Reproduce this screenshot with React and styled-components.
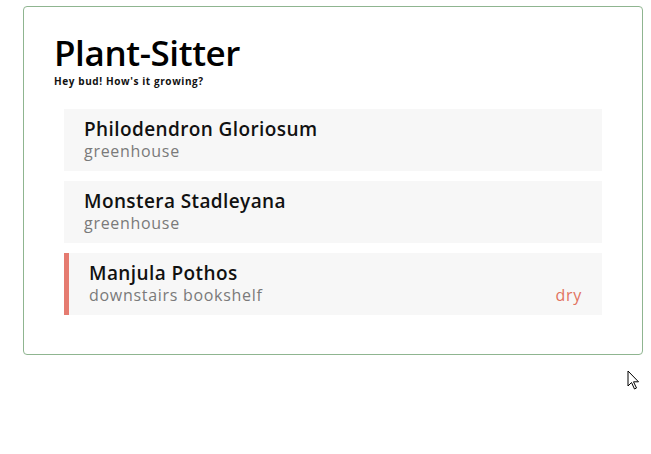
import React from 'react'
import styled, { createGlobalStyle } from 'styled-components'

const GlobalStyle = createGlobalStyle`
  body {
    margin: 0;
    background: #fff;
    font-family: "Open Sans", "Liberation Sans", sans-serif;
  }
`

const plants = [
  { name: 'Philodendron Gloriosum', location: 'greenhouse' },
  { name: 'Monstera Stadleyana', location: 'greenhouse' },
  { name: 'Manjula Pothos', location: 'downstairs bookshelf', status: 'dry' },
]

function App() {
  return (
    <Page>
      <GlobalStyle />
      <Card>
        <Header>
          <Title>Plant-Sitter</Title>
          <Tagline>Hey bud! How's it growing?</Tagline>
        </Header>
        <List>
          {plants.map((p) => (
            <Plant key={p.name} $alert={!!p.status}>
              <Info>
                <Name>{p.name}</Name>
                <Location>{p.location}</Location>
              </Info>
              {p.status && <Status>{p.status}</Status>}
            </Plant>
          ))}
        </List>
      </Card>
      <Cursor width="14" height="21" viewBox="0 0 14 21">
        <path d="M1 1 L1 16 L4.5 12.5 L7.5 19 L9.5 18 L6.5 11.8 L11.5 11.8 Z" fill="#fff" stroke="#000" strokeWidth="1" strokeLinejoin="miter" />
      </Cursor>
    </Page>
  )
}

export default App

const Page = styled.div`
  position: relative;
  width: 651px;
  height: 454px;
  padding: 6px 8px 0 23px;
  box-sizing: border-box;
`

const Card = styled.div`
  border: 1px solid #8fb590;
  border-radius: 4px;
  padding: 27px 30px 39px;
`

const Header = styled.div`
  display: flex;
  flex-direction: column;
  gap: 4px;
  padding: 0 10px 23px 0;
`

const Title = styled.h1`
  margin: 0;
  font-size: 35px;
  line-height: 38px;
  font-weight: 600;
  color: #000;
  letter-spacing: -0.4px;
`

const Tagline = styled.div`
  font-size: 10px;
  line-height: 10px;
  font-weight: 700;
  color: #111;
  letter-spacing: 0.6px;
`

const List = styled.div`
  display: flex;
  flex-direction: column;
  gap: 10px;
  margin: 0 10px;
`

const Plant = styled.div`
  display: flex;
  align-items: flex-end;
  justify-content: space-between;
  background: #f7f7f7;
  padding: 8px 20px 10px;
  border-left: ${(p) => (p.$alert ? '5px solid #e57b70' : 'none')};
`

const Info = styled.div`
  display: flex;
  flex-direction: column;
`

const Name = styled.div`
  font-size: 19px;
  line-height: 24px;
  font-weight: 600;
  color: #111;
  letter-spacing: 0.4px;
`

const Location = styled.div`
  font-size: 16px;
  line-height: 20px;
  font-weight: 400;
  color: #7a7a7a;
  letter-spacing: 0.7px;
`

const Status = styled(Location)`
  color: #e2735f;
`

const Cursor = styled.svg`
  position: absolute;
  left: 627px;
  top: 370px;
`
